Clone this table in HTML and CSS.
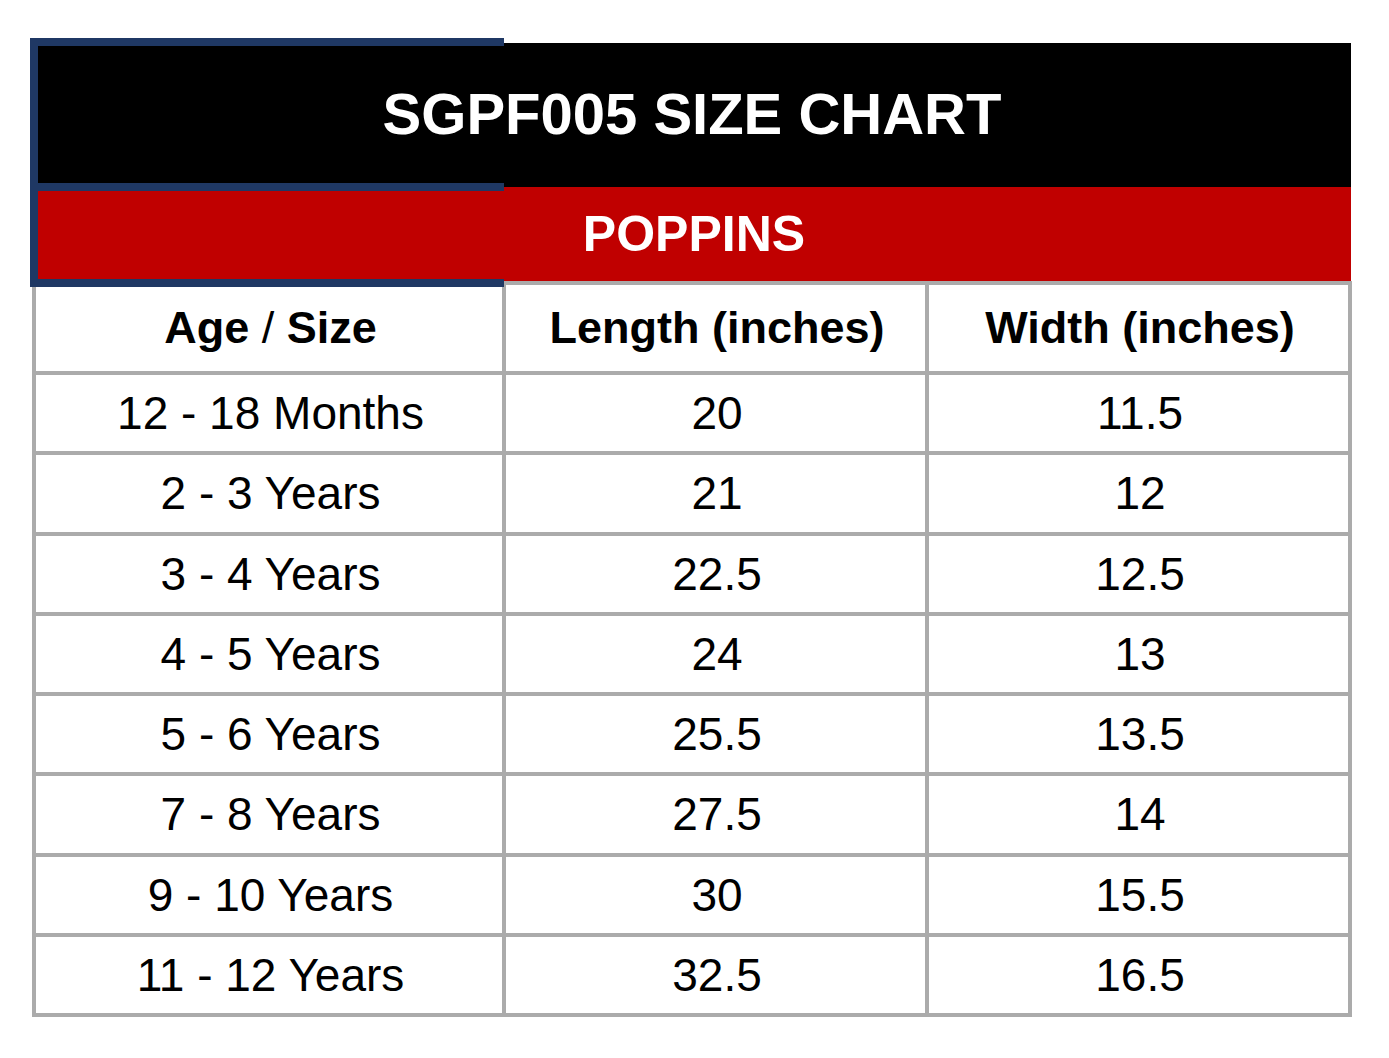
FILE: index.html
```html
<!DOCTYPE html>
<html>
<head>
<meta charset="utf-8">
<title>SGPF005 Size Chart</title>
<link rel="stylesheet" href="styles.css">
</head>
<body>
<div class="sheet">
  <div class="chart">
    <div class="title">SGPF005 SIZE CHART</div>
    <div class="subtitle">POPPINS</div>
    <div class="grid">
      <div class="cell head">Age&nbsp;<span class="slash">/</span>&nbsp;Size</div>
      <div class="cell head">Length (inches)</div>
      <div class="cell head">Width (inches)</div>

      <div class="cell">12 - 18 Months</div><div class="cell">20</div><div class="cell">11.5</div>
      <div class="cell">2 - 3 Years</div><div class="cell">21</div><div class="cell">12</div>
      <div class="cell">3 - 4 Years</div><div class="cell">22.5</div><div class="cell">12.5</div>
      <div class="cell">4 - 5 Years</div><div class="cell">24</div><div class="cell">13</div>
      <div class="cell">5 - 6 Years</div><div class="cell">25.5</div><div class="cell">13.5</div>
      <div class="cell">7 - 8 Years</div><div class="cell">27.5</div><div class="cell">14</div>
      <div class="cell">9 - 10 Years</div><div class="cell">30</div><div class="cell">15.5</div>
      <div class="cell">11 - 12 Years</div><div class="cell">32.5</div><div class="cell">16.5</div>
    </div>
    <div class="select select-top"></div>
    <div class="select select-bottom"></div>
  </div>
</div>
</body>
</html>
```

FILE: styles.css
```css
html, body {
  margin: 0;
  padding: 0;
  background: #ffffff;
}

body {
  font-family: "Liberation Sans", Arial, Helvetica, sans-serif;
  color: #000000;
}

.sheet {
  padding: 43px 0 0 32px;
}

.chart {
  position: relative;
  width: 1320px;
}

.title {
  margin-left: 1px;
  width: 1318px;
  height: 144px;
  background: #000000;
  color: #ffffff;
  font-weight: bold;
  font-size: 58px;
  display: flex;
  align-items: center;
  justify-content: center;
  padding-bottom: 4px;
  box-sizing: border-box;
}

.subtitle {
  margin-left: 1px;
  width: 1318px;
  height: 94px;
  background: #c00000;
  color: #ffffff;
  font-weight: bold;
  font-size: 50px;
  display: flex;
  align-items: center;
  justify-content: center;
  padding-left: 4px;
  box-sizing: border-box;
}

.grid {
  display: grid;
  grid-template-columns: 466px 419px 419px;
  grid-template-rows: 86px repeat(8, 76.25px);
  gap: 4px;
  padding: 4px;
  background: #ababab;
}

.cell {
  background: #ffffff;
  display: flex;
  align-items: center;
  justify-content: center;
  font-size: 46px;
  padding-left: 3px;
  white-space: pre;
}

.head {
  font-weight: bold;
  font-size: 45px;
}

.slash {
  font-weight: normal;
}

.select {
  position: absolute;
  left: -2px;
  width: 474px;
  border: 8px solid #1f3864;
  border-right: none;
  box-sizing: border-box;
}

.select-top {
  top: -5px;
  height: 153px;
}

.select-bottom {
  top: 140px;
  height: 104px;
}
```
